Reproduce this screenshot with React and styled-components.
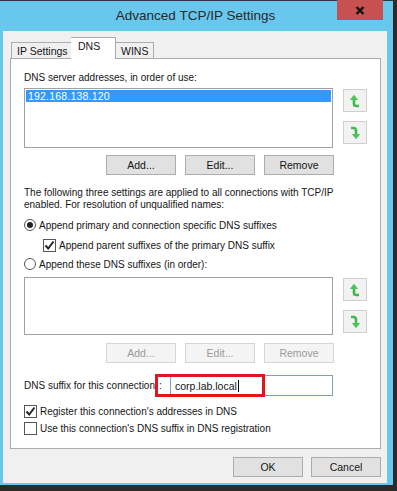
import React from 'react';
import styled, { createGlobalStyle } from 'styled-components';

const GlobalStyle = createGlobalStyle`
  html, body {
    margin: 0;
    padding: 0;
    background: #2b2b2b;
  }
  body {
    font-family: "Liberation Sans", Arial, sans-serif;
  }
`;

const Window = styled.div`
  width: 397px;
  height: 491px;
  box-sizing: border-box;
  background: #67c7ec;
  border-top: 1px solid #2e3a40;
  border-right: 4px solid #2b2b2b;
  border-bottom: 6px solid #2b2b2b;
  display: flex;
  flex-direction: column;
  font-size: 10px;
  color: #151515;
`;

const TitleBar = styled.div`
  height: 30px;
  display: flex;
  align-items: flex-start;
  padding-right: 10px;
`;

const Title = styled.div`
  flex: 1;
  padding-left: 54px;
  text-align: center;
  font-size: 13.5px;
  line-height: 29px;
  color: #2a2a2a;
`;

const CloseButton = styled.div`
  width: 46px;
  height: 20px;
  margin-top: -1px;
  background: #c75050;
  display: flex;
  align-items: center;
  justify-content: center;
`;

const Client = styled.div`
  margin: 0 6px 2px 3px;
  flex: 1;
  background: #f0f0f0;
  padding: 6px 6px 0 7px;
  display: flex;
  flex-direction: column;
`;

const TabStrip = styled.div`
  display: flex;
  align-items: flex-end;
  height: 22px;
  padding-left: 1px;
  position: relative;
  z-index: 1;
  margin-bottom: -1px;
`;

const Tab = styled.div`
  box-sizing: border-box;
  width: ${p => p.$w}px;
  height: ${p => (p.$active ? 22 : 17)}px;
  margin-left: ${p => (p.$active ? -1 : 0)}px;
  border: 1px solid #acacac;
  border-bottom: ${p => (p.$active ? 'none' : '1px solid #acacac')};
  background: ${p => (p.$active ? '#ffffff' : '#f0f0f0')};
  padding: ${p => (p.$active ? '2px 0 0 7px' : '2px 0 0 5px')};
  font-size: 10.5px;
  line-height: 13px;
  white-space: nowrap;
  & + & {
    border-left: ${p => (p.$active ? '1px solid #acacac' : 'none')};
  }
`;

const Panel = styled.div`
  box-sizing: border-box;
  height: 391px;
  background: #ffffff;
  border: 1px solid #acacac;
  padding: 12px 13px 0 13px;
  display: flex;
  flex-direction: column;
`;

const Label = styled.div`
  line-height: 14px;
  white-space: nowrap;
`;

const ListRow = styled.div`
  display: flex;
  gap: 10px;
  margin-top: ${p => p.$mt}px;
`;

const ListBox = styled.div`
  box-sizing: border-box;
  width: 310px;
  height: ${p => p.$h}px;
  border: 1px solid #a0a0a0;
  background: #ffffff;
  padding: 1px;
`;

const ListItem = styled.div`
  height: 12px;
  background: #3399ff;
  color: #ffffff;
  font-size: 10.5px;
  line-height: 12px;
  padding-left: 2px;
  letter-spacing: 0.2px;
`;

const ArrowColumn = styled.div`
  display: flex;
  flex-direction: column;
  gap: 9px;
  padding-top: 1px;
`;

const ArrowButton = styled.div`
  box-sizing: border-box;
  width: 24px;
  height: 23px;
  border: 1px solid #cfcfcf;
  background: #f2f2f2;
  display: flex;
  align-items: center;
  justify-content: center;
`;

const ButtonRow = styled.div`
  width: 310px;
  display: flex;
  justify-content: flex-end;
  gap: 9px;
  margin-top: ${p => p.$mt}px;
`;

const Button = styled.div`
  box-sizing: border-box;
  width: 70px;
  height: 20px;
  border: 1px solid ${p => (p.$disabled ? '#d5d5d5' : '#acacac')};
  background: ${p => (p.$disabled ? '#f4f4f4' : '#e1e1e1')};
  color: ${p => (p.$disabled ? '#9a9a9a' : '#151515')};
  display: flex;
  align-items: center;
  justify-content: center;
  font-size: 10.5px;
`;

const Paragraph = styled.div`
  margin-top: 12px;
  line-height: 12px;
`;

const OptionRow = styled.div`
  display: flex;
  align-items: center;
  gap: 3px;
  height: 14px;
  margin-top: ${p => p.$mt}px;
  margin-left: ${p => p.$indent || 0}px;
  white-space: nowrap;
`;

const Radio = styled.div`
  box-sizing: border-box;
  width: 12px;
  height: 12px;
  border-radius: 50%;
  border: 1px solid #555555;
  background: #ffffff;
  display: flex;
  align-items: center;
  justify-content: center;
  &::after {
    content: '';
    width: 6px;
    height: 6px;
    border-radius: 50%;
    background: ${p => (p.$checked ? '#222222' : 'transparent')};
  }
`;

const Box = styled.div`
  box-sizing: border-box;
  width: 13px;
  height: 13px;
  border: 1px solid #555555;
  background: #ffffff;
  display: flex;
  align-items: center;
  justify-content: center;
`;

const SuffixRow = styled.div`
  display: flex;
  align-items: center;
  height: 23px;
  margin-top: 11px;
  position: relative;
`;

const SuffixLabel = styled.div`
  white-space: nowrap;
`;

const FieldWrap = styled.div`
  display: flex;
  align-items: center;
  height: 23px;
  position: relative;
`;

const Colon = styled.div`
  width: 15px;
  padding-left: 4px;
  box-sizing: border-box;
`;

const TextInput = styled.div`
  box-sizing: border-box;
  width: 163px;
  height: 21px;
  border: 1px solid #7a9fc8;
  background: #ffffff;
  padding-left: 4px;
  display: flex;
  align-items: center;
  font-size: 10.5px;
`;

const Caret = styled.span`
  display: inline-block;
  width: 1px;
  height: 12px;
  margin-left: 1px;
  background: #000000;
`;

const RedMark = styled.div`
  position: absolute;
  left: 0;
  top: 0;
  width: 110px;
  height: 23px;
  box-sizing: border-box;
  border: 3px solid #e3161e;
  pointer-events: none;
`;

const Footer = styled.div`
  display: flex;
  justify-content: flex-end;
  gap: 8px;
  margin-top: 8px;
`;

const UpIcon = () => (
  <svg width="12" height="14" viewBox="0 0 12 14">
    <path d="M5 5 V10 Q5 12 7.5 12 H10" fill="none" stroke="#3fb94a" strokeWidth="2.6" />
    <polygon points="5,0.8 9.2,6 0.8,6" fill="#4cc45a" />
  </svg>
);

const DownIcon = () => (
  <svg width="12" height="14" viewBox="0 0 12 14">
    <path d="M2 2 H4.5 Q7 2 7 4.5 V9" fill="none" stroke="#3fb94a" strokeWidth="2.6" />
    <polygon points="2.8,8 11.2,8 7,13.2" fill="#4cc45a" />
  </svg>
);

const CheckMark = () => (
  <svg width="11" height="11" viewBox="0 0 11 11">
    <path d="M1.5 5.5 L4.2 8.5 L9.5 1.5" fill="none" stroke="#222" strokeWidth="1.9" />
  </svg>
);

const CloseIcon = () => (
  <svg width="10" height="9" viewBox="0 0 10 9">
    <path d="M1.5 1 L8.5 8 M8.5 1 L1.5 8" stroke="#111" strokeWidth="2.4" />
  </svg>
);

const Option = ({ kind, checked, children, mt, indent }) => (
  <OptionRow $mt={mt} $indent={indent}>
    {kind === 'radio' ? <Radio $checked={checked} /> : <Box>{checked && <CheckMark />}</Box>}
    <span>{children}</span>
  </OptionRow>
);

const Arrows = () => (
  <ArrowColumn>
    <ArrowButton><UpIcon /></ArrowButton>
    <ArrowButton><DownIcon /></ArrowButton>
  </ArrowColumn>
);

export default function App() {
  return (
    <>
      <GlobalStyle />
      <Window>
        <TitleBar>
          <Title>Advanced TCP/IP Settings</Title>
          <CloseButton><CloseIcon /></CloseButton>
        </TitleBar>
        <Client>
          <TabStrip>
            <Tab $w={61}>IP Settings</Tab>
            <Tab $w={45} $active>DNS</Tab>
            <Tab $w={38}>WINS</Tab>
          </TabStrip>
          <Panel>
            <Label>DNS server addresses, in order of use:</Label>
            <ListRow $mt={3}>
              <ListBox $h={60}>
                <ListItem>192.168.138.120</ListItem>
              </ListBox>
              <Arrows />
            </ListRow>
            <ButtonRow $mt={7}>
              <Button>Add...</Button>
              <Button>Edit...</Button>
              <Button>Remove</Button>
            </ButtonRow>
            <Paragraph>
              The following three settings are applied to all connections with TCP/IP
              <br />
              enabled. For resolution of unqualified names:
            </Paragraph>
            <Option kind="radio" checked mt={7}>Append primary and connection specific DNS suffixes</Option>
            <Option kind="check" checked mt={6} indent={19}>Append parent suffixes of the primary DNS suffix</Option>
            <Option kind="radio" mt={5}>Append these DNS suffixes (in order):</Option>
            <ListRow $mt={6}>
              <ListBox $h={58} />
              <Arrows />
            </ListRow>
            <ButtonRow $mt={8}>
              <Button $disabled>Add...</Button>
              <Button $disabled>Edit...</Button>
              <Button $disabled>Remove</Button>
            </ButtonRow>
            <SuffixRow>
              <SuffixLabel>DNS suffix for this connection</SuffixLabel>
              <FieldWrap>
                <Colon>:</Colon>
                <TextInput>corp.lab.local<Caret /></TextInput>
                <RedMark />
              </FieldWrap>
            </SuffixRow>
            <Option kind="check" checked mt={7}>Register this connection's addresses in DNS</Option>
            <Option kind="check" mt={3}>Use this connection's DNS suffix in DNS registration</Option>
          </Panel>
          <Footer>
            <Button>OK</Button>
            <Button>Cancel</Button>
          </Footer>
        </Client>
      </Window>
    </>
  );
}
